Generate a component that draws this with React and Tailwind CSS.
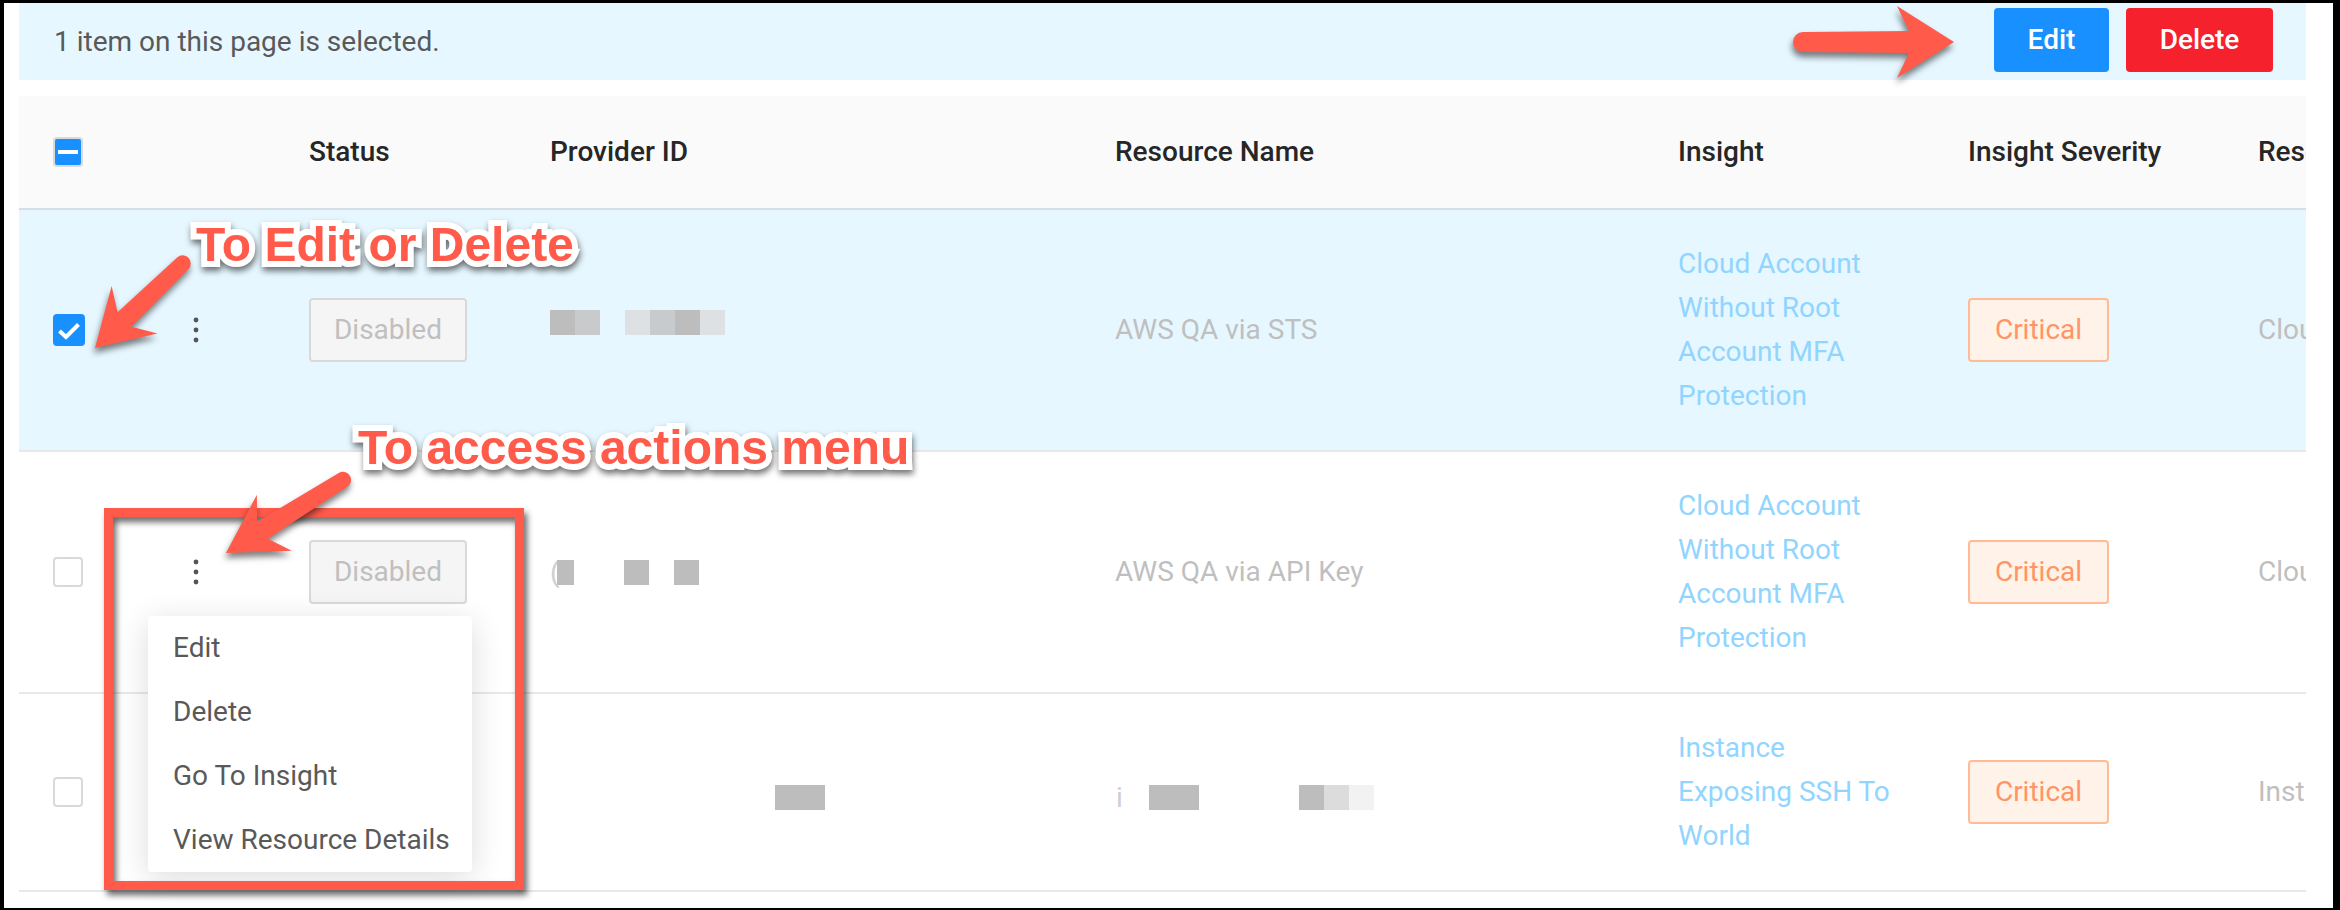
import React from "react";

// Skitch-style annotation arrow, drawn pointing +x with its tip at the origin
const arrowPath = (L, h, w, s1, s2, notch) =>
  `M0 0 L${-h} ${-w} L${-(h - notch)} ${-s2} L${-L} ${-s1} A${s1} ${s1} 0 0 0 ${-L} ${s1} L${-(h - notch)} ${s2} L${-h} ${w} Z`;

const Checkbox = ({ state }) => {
  if (state === "checked")
    return (
      <div className="w-[32px] h-[32px] rounded-[4px] bg-[#1890ff] flex items-center justify-center">
        <svg width="32" height="32" viewBox="0 0 32 32">
          <path d="M6.5 17 L13 23 L25.5 10.5" stroke="#fff" strokeWidth="4" fill="none" />
        </svg>
      </div>
    );
  if (state === "indeterminate")
    return (
      <div className="w-[30px] h-[30px] rounded-[4px] bg-[#1890ff] border-2 border-[#d9d9d9] flex items-center justify-center">
        <div className="w-[20px] h-[4px] bg-white" />
      </div>
    );
  return <div className="w-[30px] h-[30px] rounded-[4px] bg-white border-2 border-[#d9d9d9]" />;
};

const Kebab = () => (
  <svg width="8" height="26" viewBox="0 0 8 26">
    <circle cx="4" cy="3" r="2.4" fill="#555" />
    <circle cx="4" cy="13" r="2.4" fill="#555" />
    <circle cx="4" cy="23" r="2.4" fill="#555" />
  </svg>
);

// pixelated redaction blocks
const Blocks = ({ items, top }) => (
  <div className="h-[44px] flex items-start" style={{ paddingTop: top }}>
    {items.map((b, i) =>
      b.glyph ? (
        <span key={i} className="text-[28px] leading-[25px] text-[#cfcfcf]" style={{ marginLeft: b.ml || 0 }}>
          {b.glyph}
        </span>
      ) : (
        <div key={i} className="h-[25px]" style={{ width: b.w, marginLeft: b.ml || 0, background: b.c }} />
      )
    )}
  </div>
);

const rows = [
  {
    selected: true,
    provider: (
      <Blocks
        top={2}
        items={[
          { w: 25, c: "#bdbdbd" },
          { w: 25, c: "#c9cacb" },
          { w: 25, c: "#dde1e4", ml: 25 },
          { w: 25, c: "#c8cbcd" },
          { w: 25, c: "#bdbdbd" },
          { w: 25, c: "#dde1e4" },
        ]}
      />
    ),
    resource: "AWS QA via STS",
    insight: ["Cloud Account", "Without Root", "Account MFA", "Protection"],
    res: "Cloud",
  },
  {
    provider: (
      <Blocks
        top={10}
        items={[
          { glyph: "(", ml: 0 },
          { w: 17, c: "#bdbdbd", ml: -3 },
          { w: 25, c: "#bdbdbd", ml: 50 },
          { w: 25, c: "#bdbdbd", ml: 25 },
        ]}
      />
    ),
    resource: "AWS QA via API Key",
    insight: ["Cloud Account", "Without Root", "Account MFA", "Protection"],
    res: "Cloud",
  },
  {
    provider: <Blocks top={15} items={[{ w: 50, c: "#bdbdbd", ml: 225 }]} />,
    resource: (
      <Blocks
        top={15}
        items={[
          { glyph: "i", ml: 1 },
          { w: 50, c: "#bdbdbd", ml: 26 },
          { w: 25, c: "#bdbdbd", ml: 100 },
          { w: 25, c: "#dcdcdc" },
          { w: 25, c: "#f2f2f2" },
        ]}
      />
    ),
    insight: ["Instance", "Exposing SSH To", "World"],
    res: "Instance",
  },
];

const annot =
  "absolute text-[48px] font-bold leading-none text-[#ff5a4a] font-['Liberation_Sans',Arial,sans-serif] whitespace-nowrap [-webkit-text-stroke:12px_white] [paint-order:stroke_fill] [filter:drop-shadow(1px_4px_3px_rgba(0,0,0,0.55))]";

export default function App() {
  return (
    <div className="relative w-[2340px] h-[910px] bg-black pt-[3px] pl-[4px] pr-[7px] pb-[2px] font-['Roboto',sans-serif]">
      <div className="h-full bg-white pl-[15px] pr-[27px] overflow-hidden">
        {/* selection banner */}
        <div className="h-[77px] bg-[#e6f7ff] flex items-center pl-[35px] pr-[33px]">
          <span className="text-[28px] text-[#595959]">1 item on this page is selected.</span>
          <div className="ml-auto flex items-center gap-[17px] -mt-[3px]">
            <button className="w-[115px] h-[64px] rounded-[4px] bg-[#1890ff] text-white text-[28px] font-medium">Edit</button>
            <button className="w-[147px] h-[64px] rounded-[4px] bg-[#f5222d] text-white text-[28px] font-medium">Delete</button>
          </div>
        </div>

        {/* table */}
        <div className="mt-[16px] overflow-hidden">
          <div className="flex items-center h-[114px] bg-[#fafafa] border-b-2 border-[#d5dee5] text-[28px] font-medium text-[#262626] whitespace-nowrap">
            <div className="w-[141px] shrink-0 pl-[34px]">
              <Checkbox state="indeterminate" />
            </div>
            <div className="w-[130px] shrink-0" />
            <div className="w-[241px] shrink-0 pl-[19px]">Status</div>
            <div className="w-[565px] shrink-0 pl-[19px]">Provider ID</div>
            <div className="w-[563px] shrink-0 pl-[19px]">Resource Name</div>
            <div className="w-[290px] shrink-0 pl-[19px]">Insight</div>
            <div className="w-[290px] shrink-0 pl-[19px]">Insight Severity</div>
            <div className="w-[300px] shrink-0 pl-[19px]">Resource Type</div>
          </div>

          {rows.map((r, i) => (
            <div
              key={i}
              className={`flex items-center py-[32px] border-b-2 border-[#e8e8e8] text-[28px] leading-[44px] whitespace-nowrap ${
                r.selected ? "bg-[#e6f7ff]" : "bg-white"
              }`}
            >
              <div className="w-[141px] shrink-0 pl-[34px]">
                <Checkbox state={r.selected ? "checked" : "empty"} />
              </div>
              <div className="w-[130px] shrink-0 pl-[32px] flex">
                <Kebab />
              </div>
              <div className="w-[241px] shrink-0 pl-[19px]">
                <div className="w-[158px] h-[64px] rounded-[4px] border-2 border-[#d9d9d9] bg-[#f5f5f5] flex items-center justify-center text-[#bfbfbf]">
                  Disabled
                </div>
              </div>
              <div className="w-[565px] shrink-0 pl-[19px]">{r.provider}</div>
              <div className="w-[563px] shrink-0 pl-[19px] text-[#bfbfbf]">{r.resource}</div>
              <div className="w-[290px] shrink-0 pl-[19px] text-[#91d5ff]">
                {r.insight.map((l) => (
                  <div key={l}>{l}</div>
                ))}
              </div>
              <div className="w-[290px] shrink-0 pl-[19px]">
                <div className="w-[141px] h-[64px] rounded-[4px] border-2 border-[#ffbb96] bg-[#fff2e8] flex items-center justify-center text-[#ff9466]">
                  Critical
                </div>
              </div>
              <div className="w-[300px] shrink-0 pl-[19px] text-[#bfbfbf]">{r.res}</div>
            </div>
          ))}
        </div>
      </div>

      {/* actions dropdown */}
      <div className="absolute left-[148px] top-[616px] w-[324px] bg-white rounded-[4px] shadow-[0_6px_32px_rgba(0,0,0,0.14)] text-[28px] text-[#595959] whitespace-nowrap">
        {["Edit", "Delete", "Go To Insight", "View Resource Details"].map((m) => (
          <div key={m} className="h-[64px] flex items-center px-[25px]">
            {m}
          </div>
        ))}
      </div>

      {/* annotations */}
      <div className="absolute left-[104px] top-[508px] w-[420px] h-[382px] border-[9px] border-[#ff5a4a] [filter:drop-shadow(3px_5px_3px_rgba(0,0,0,0.6))]" />

      <svg
        className="absolute left-0 top-0 pointer-events-none [filter:drop-shadow(-1px_5px_3px_rgba(0,0,0,0.5))]"
        width="2340"
        height="910"
      >
        <path d={arrowPath(151, 57, 36, 10, 11, 12)} transform="translate(1954 42)" fill="#ff5a4a" />
        <path d={arrowPath(122, 55, 33, 8, 10, 14)} transform="translate(95 348) rotate(136)" fill="#ff5a4a" />
        <path d={arrowPath(138, 57, 33, 8, 10, 14)} transform="translate(226 553) rotate(148)" fill="#ff5a4a" />
      </svg>

      <div className={`${annot} left-[196px] top-[221px]`}>To Edit or Delete</div>
      <div className={`${annot} left-[358px] top-[424px]`}>To access actions menu</div>
    </div>
  );
}
